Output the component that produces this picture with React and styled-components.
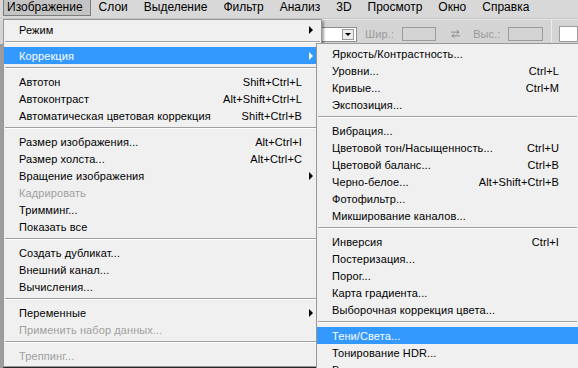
import React from "react";
import styled, { createGlobalStyle } from "styled-components";

const Global = createGlobalStyle`
  html, body {
    margin: 0;
    padding: 0;
    overflow: hidden;
    background: #3a3a3a;
  }
  #root {
    width: 578px;
    height: 368px;
  }
`;

const imageMenu = [
  { label: "Режим", sub: true },
  { sep: true },
  { label: "Коррекция", sub: true, active: true },
  { sep: true },
  { label: "Автотон", keys: "Shift+Ctrl+L" },
  { label: "Автоконтраст", keys: "Alt+Shift+Ctrl+L" },
  { label: "Автоматическая цветовая коррекция", keys: "Shift+Ctrl+B" },
  { sep: true },
  { label: "Размер изображения...", keys: "Alt+Ctrl+I" },
  { label: "Размер холста...", keys: "Alt+Ctrl+C" },
  { label: "Вращение изображения", sub: true },
  { label: "Кадрировать", disabled: true },
  { label: "Тримминг..." },
  { label: "Показать все" },
  { sep: true },
  { label: "Создать дубликат..." },
  { label: "Внешний канал..." },
  { label: "Вычисления..." },
  { sep: true },
  { label: "Переменные", sub: true },
  { label: "Применить набор данных...", disabled: true },
  { sep: true },
  { label: "Треппинг...", disabled: true },
];

const adjustMenu = [
  { label: "Яркость/Контрастность..." },
  { label: "Уровни...", keys: "Ctrl+L" },
  { label: "Кривые...", keys: "Ctrl+M" },
  { label: "Экспозиция..." },
  { sep: true },
  { label: "Вибрация..." },
  { label: "Цветовой тон/Насыщенность...", keys: "Ctrl+U" },
  { label: "Цветовой баланс...", keys: "Ctrl+B" },
  { label: "Черно-белое...", keys: "Alt+Shift+Ctrl+B" },
  { label: "Фотофильтр..." },
  { label: "Микширование каналов..." },
  { sep: true },
  { label: "Инверсия", keys: "Ctrl+I" },
  { label: "Постеризация..." },
  { label: "Порог..." },
  { label: "Карта градиента..." },
  { label: "Выборочная коррекция цвета..." },
  { sep: true },
  { label: "Тени/Света...", active: true },
  { label: "Тонирование HDR..." },
  { label: "Варианты..." },
];

const topItems = ["Изображение", "Слои", "Выделение", "Фильтр", "Анализ", "3D", "Просмотр", "Окно", "Справка"];

function App() {
  return (
    <Screen>
      <Global />
      <MenuBar>
        {topItems.map((t, i) => (
          <TopItem key={t} $open={i === 0}>{t}</TopItem>
        ))}
      </MenuBar>

      <Workspace>
        <Toolbar>
          <Combo>
            <ComboArrow />
          </Combo>
          <Label>Шир.:</Label>
          <Field />
          <Swap viewBox="0 0 12 10">
            <path d="M1 3h9M7 1l3 2-3 2M11 7H2M5 5L2 7l3 2" fill="none" stroke="#8a8a8a" strokeWidth="1" />
          </Swap>
          <Label>Выс.:</Label>
          <Field />
          <VLine />
          <WhiteBox />
        </Toolbar>
        <Canvas />
      </Workspace>

      <Menu $left={3} $top={19} $width={319}>
        {imageMenu.map((it, i) => renderItem(it, i))}
      </Menu>
      <Menu $left={316} $top={43} $width={263}>
        {adjustMenu.map((it, i) => renderItem(it, i))}
      </Menu>
    </Screen>
  );
}

function renderItem(it, i) {
  if (it.sep) return <Separator key={i} />;
  return (
    <Row key={i} $active={it.active} $disabled={it.disabled}>
      <span>{it.label}</span>
      {it.keys && <Keys>{it.keys}</Keys>}
      {it.sub && <SubArrow $active={it.active} />}
    </Row>
  );
}

export default App;

const Screen = styled.div`
  position: relative;
  width: 578px;
  height: 368px;
  overflow: hidden;
  display: flex;
  flex-direction: column;
  font-family: "Liberation Sans", Arial, sans-serif;
  font-size: 11px;
  letter-spacing: 0.1px;
  color: #000;
`;

const MenuBar = styled.div`
  height: 19px;
  flex: none;
  display: flex;
  align-items: stretch;
  gap: 4px;
  padding: 0 0 0 3px;
  background: #d8d8d8;
  border-bottom: 1px solid #c4c4c4;
  box-sizing: border-box;
`;

const TopItem = styled.div`
  display: flex;
  align-items: center;
  padding: 0 7px 1px 3px;
  margin-bottom: 2px;
  font-size: 12px;
  letter-spacing: 0;
  border: 1px solid ${(p) => (p.$open ? "#7c7c7c" : "transparent")};
  border-top: none;
  background: ${(p) => (p.$open ? "#c4c4c4" : "transparent")};
`;

const Workspace = styled.div`
  flex: 1;
  display: flex;
  flex-direction: column;
  background: #9c9c9c;
`;

const Toolbar = styled.div`
  height: 25px;
  flex: none;
  display: flex;
  align-items: flex-end;
  padding: 0 0 2px 322px;
  background: #d4d4d4;
  border-top: 1px solid #e6e6e6;
  box-sizing: border-box;
`;

const Combo = styled.div`
  width: 38px;
  height: 15px;
  background: #fff;
  border: 1px solid #8e8e8e;
  border-left: none;
  display: flex;
  justify-content: flex-end;
  align-items: center;
  padding-right: 2px;
  box-sizing: border-box;
`;

const ComboArrow = styled.div`
  width: 12px;
  height: 11px;
  border: 1px solid #9a9a9a;
  background: #ececec;
  box-sizing: border-box;
  position: relative;
  &::after {
    content: "";
    position: absolute;
    left: 2px;
    top: 3px;
    border-left: 3px solid transparent;
    border-right: 3px solid transparent;
    border-top: 3px solid #000;
  }
`;

const Label = styled.div`
  color: #9a9a9a;
  font-size: 11px;
  margin: 0 8px 1px 8px;
  line-height: 14px;
`;

const Field = styled.div`
  width: 37px;
  height: 14px;
  border: 1px solid #9c9c9c;
  background: #d4d4d4;
  box-sizing: border-box;
  margin-bottom: 1px;
`;

const Swap = styled.svg`
  width: 12px;
  height: 10px;
  margin: 0 4px 3px 14px;
`;

const VLine = styled.div`
  width: 1px;
  height: 22px;
  background: #a4a4a4;
  margin-left: 8px;
  border-right: 1px solid #ececec;
`;

const WhiteBox = styled.div`
  width: 20px;
  height: 16px;
  background: #fff;
  border: 1px solid #9c9c9c;
  margin-left: 7px;
  box-sizing: border-box;
`;

const Canvas = styled.div`
  flex: 1;
  margin-left: 3px;
  background: #3a3a3a;
`;

const Menu = styled.div`
  position: absolute;
  left: ${(p) => p.$left}px;
  top: ${(p) => p.$top}px;
  width: ${(p) => p.$width}px;
  box-sizing: border-box;
  padding: 1px 0 2px;
  background: #f0f0f0;
  border: 1px solid #979797;
  box-shadow: 2px 2px 2px rgba(0, 0, 0, 0.35);
`;

const Row = styled.div`
  position: relative;
  height: 17px;
  display: flex;
  align-items: center;
  justify-content: space-between;
  padding: 0 19px 0 15px;
  white-space: nowrap;
  background: ${(p) => (p.$active ? "#3399ff" : "transparent")};
  color: ${(p) => (p.$active ? "#fff" : p.$disabled ? "#a0a0a0" : "#000")};
`;

const Keys = styled.span`
  margin-left: 20px;
`;

const SubArrow = styled.i`
  position: absolute;
  right: 8px;
  top: 5px;
  width: 0;
  height: 0;
  border-top: 4px solid transparent;
  border-bottom: 4px solid transparent;
  border-left: 4px solid ${(p) => (p.$active ? "#fff" : "#000")};
`;

const Separator = styled.div`
  height: 1px;
  margin: 3px 1px 4px;
  background: #a0a0a0;
  border-bottom: 1px solid #ffffff;
`;
